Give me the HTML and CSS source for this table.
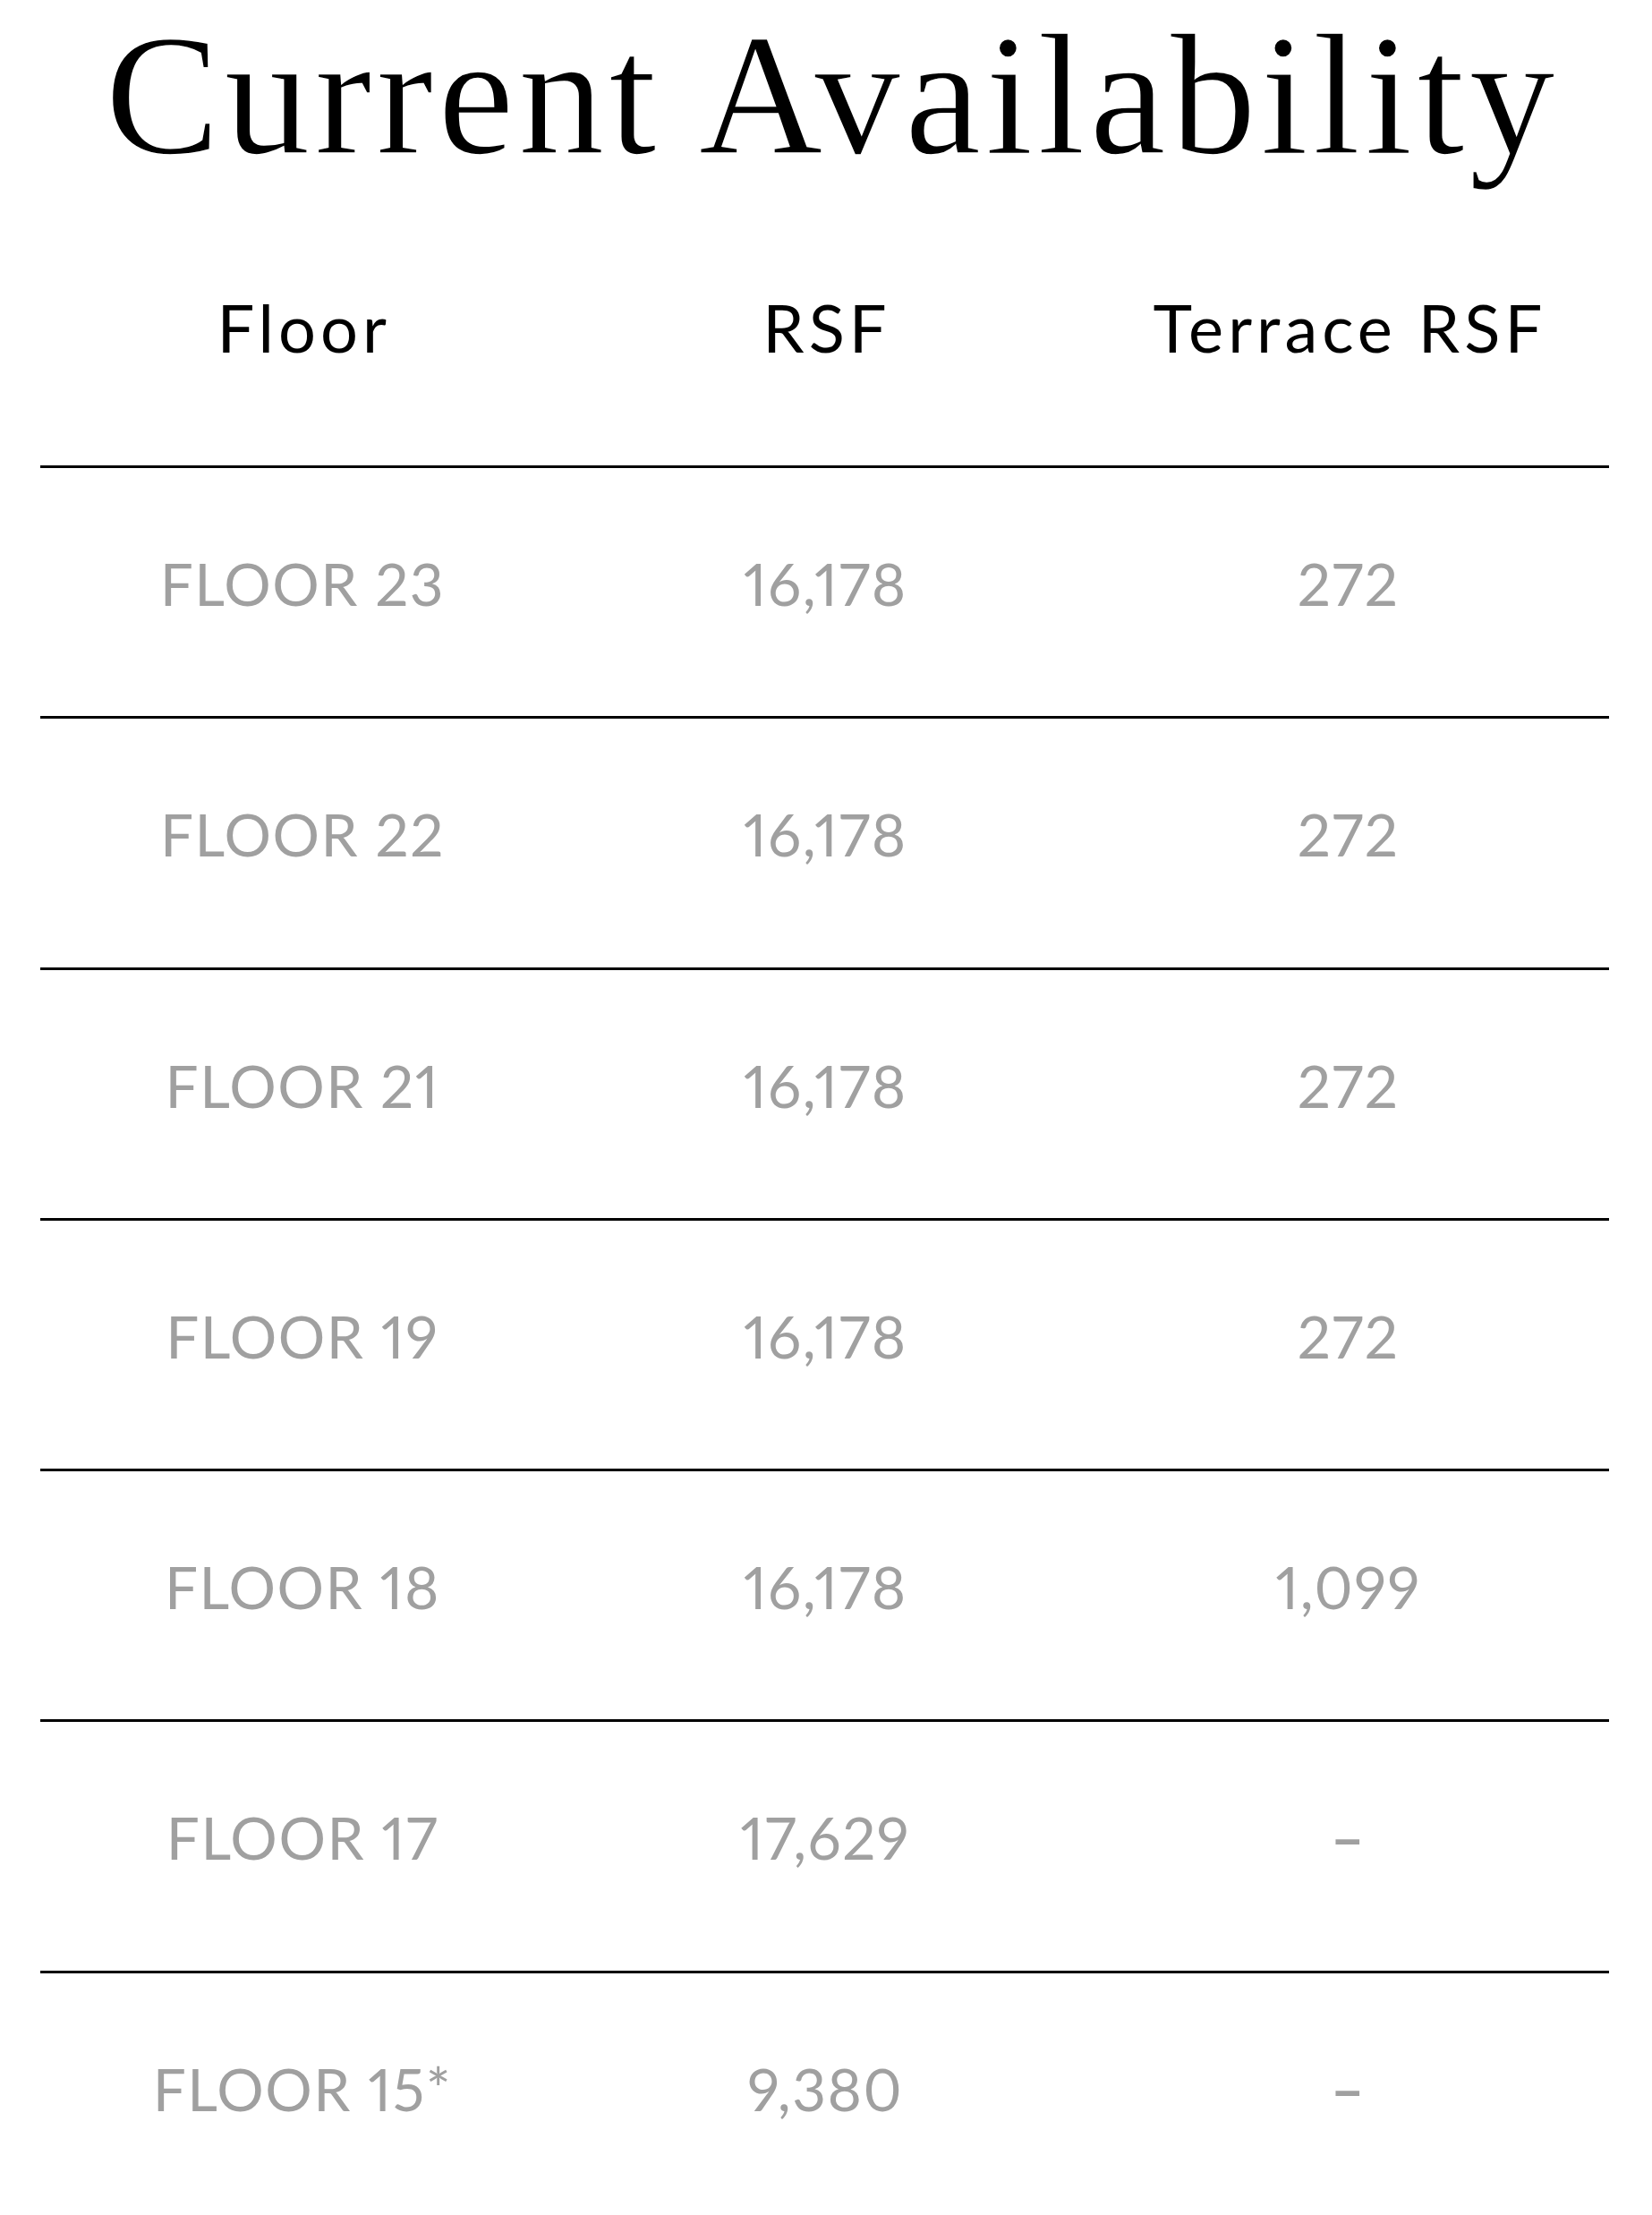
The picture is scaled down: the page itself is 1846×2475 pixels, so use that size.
FILE: index.html
```html
<!DOCTYPE html>
<html lang="en">
<head>
<meta charset="utf-8">
<title>Current Availability</title>
<link rel="stylesheet" href="styles.css">
</head>
<body>
<main class="page">
  <h1 class="title">Current Availability</h1>
  <div class="table">
    <div class="row head">
      <div class="cell">Floor</div>
      <div class="cell">RSF</div>
      <div class="cell">Terrace RSF</div>
    </div>
    <div class="row data">
      <div class="cell">FLOOR 23</div>
      <div class="cell">16,178</div>
      <div class="cell">272</div>
    </div>
    <div class="row data">
      <div class="cell">FLOOR 22</div>
      <div class="cell">16,178</div>
      <div class="cell">272</div>
    </div>
    <div class="row data">
      <div class="cell">FLOOR 21</div>
      <div class="cell">16,178</div>
      <div class="cell">272</div>
    </div>
    <div class="row data">
      <div class="cell">FLOOR 19</div>
      <div class="cell">16,178</div>
      <div class="cell">272</div>
    </div>
    <div class="row data">
      <div class="cell">FLOOR 18</div>
      <div class="cell">16,178</div>
      <div class="cell">1,099</div>
    </div>
    <div class="row data">
      <div class="cell">FLOOR 17</div>
      <div class="cell">17,629</div>
      <div class="cell dash">–</div>
    </div>
    <div class="row data">
      <div class="cell">FLOOR 15*</div>
      <div class="cell">9,380</div>
      <div class="cell dash">–</div>
    </div>
  </div>
</main>
</body>
</html>
```
FILE: styles.css
```css
html, body {
  margin: 0;
  padding: 0;
  background: #ffffff;
}

.page {
  width: 1846px;
  height: 2475px;
  overflow: hidden;
}

.title {
  margin: 0;
  padding: 0 0 0 14px;
  height: 213px;
  font-family: "Liberation Serif", "Times New Roman", serif;
  font-weight: 400;
  font-size: 192px;
  line-height: 213px;
  text-align: center;
  color: #000;
  letter-spacing: 4.9px;
  -webkit-text-stroke: 1.6px #ffffff;
}

.table {
  margin-left: 45px;
  width: 1753px;
}

.row {
  display: grid;
  grid-template-columns: 1fr 1fr 1fr;
  box-sizing: border-box;
}

.cell {
  text-align: center;
  font-family: Lato, "Noto Sans", sans-serif;
  white-space: nowrap;
  font-variant-numeric: proportional-nums;
}

.head {
  height: 307px;
  padding-top: 109px;
}

.head .cell {
  font-size: 74px;
  line-height: 1.2;
  color: #000;
  letter-spacing: 5px;
  padding-left: 5px;
}

.data {
  height: 280.3px;
  border-top: 3px solid #000;
  padding-top: 90px;
}

.data .cell {
  font-size: 65.6px;
  line-height: 1.2;
  color: #a0a0a0;
  letter-spacing: 1.5px;
  padding-left: 1.5px;
}

.data .dash {
  font-weight: 700;
}
```
